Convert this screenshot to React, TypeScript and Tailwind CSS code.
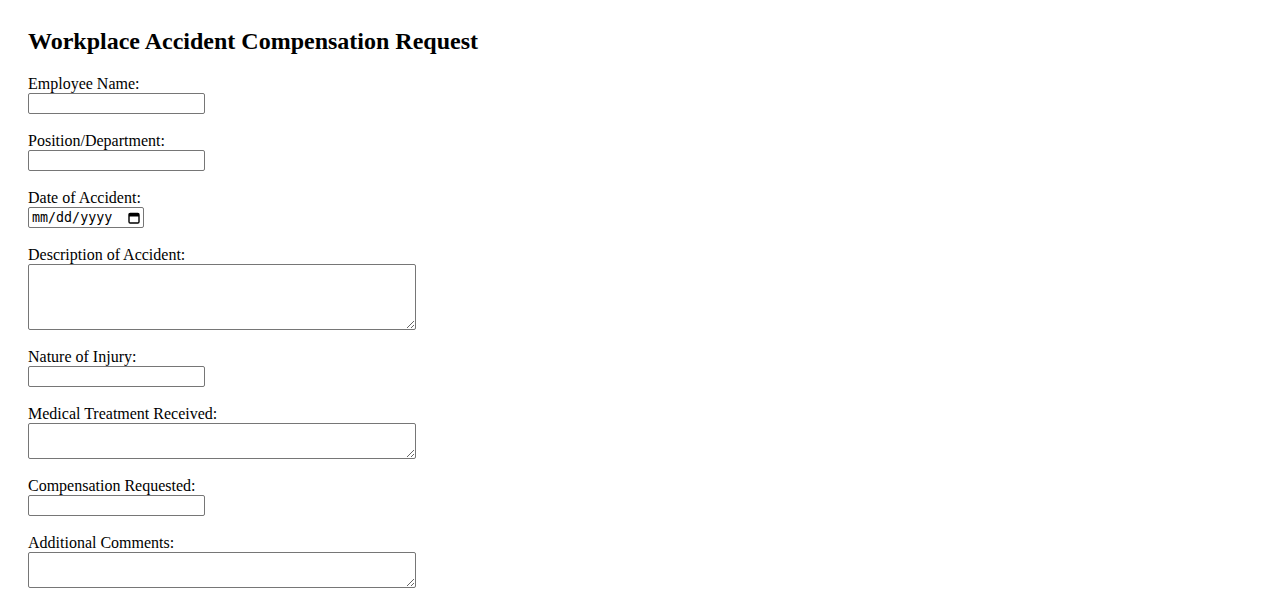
import React from "react";

const serif = { fontFamily: '"Liberation Serif", "Times New Roman", serif' };

function Label({ children }: { children: React.ReactNode }) {
  return <label className="block text-[16px] leading-[15px] pb-[2px] text-black">{children}</label>;
}

function TextInput() {
  return (
    <input
      type="text"
      className="block w-[177px] h-[21px] border border-[#767676] rounded-[2px] bg-white px-[2px] py-[1px] text-[13.33px] [font-family:'DejaVu_Sans',sans-serif]"
    />
  );
}

function Area({ h }: { h: string }) {
  return (
    <textarea
      className={`block w-[388px] ${h} border border-[#767676] rounded-[2px] bg-white px-[2px] py-[2px] text-[13.33px] [font-family:'Liberation_Mono',monospace] resize`}
    />
  );
}

export default function App() {
  return (
    <div className="bg-white p-[28px] text-black" style={serif}>
      <h2 className="text-[24px] font-bold leading-[26px] mb-[22px]">Workplace Accident Compensation Request</h2>
      <form className="flex flex-col">
        <div className="mb-[19px]">
          <Label>Employee Name:</Label>
          <TextInput />
        </div>
        <div className="mb-[19px]">
          <Label>Position/Department:</Label>
          <TextInput />
        </div>
        <div className="mb-[19px]">
          <Label>Date of Accident:</Label>
          <div className="flex items-center w-[116px] h-[21px] border border-[#767676] rounded-[2px] bg-white pl-[3px] pr-[2px] justify-between">
            <span className="text-[13.33px] leading-[19px] text-black [font-family:'DejaVu_Sans_Mono',monospace]">mm/dd/yyyy</span>
            <svg width="12" height="12" viewBox="0 0 12 12" className="mr-[1px]">
              <rect x="1" y="1.5" width="10" height="9.5" rx="1.2" fill="none" stroke="#000" strokeWidth="1.4" />
              <rect x="1" y="1.5" width="10" height="3" fill="#000" />
            </svg>
          </div>
        </div>
        <div className="mb-[19px]">
          <Label>Description of Accident:</Label>
          <Area h="h-[66px]" />
        </div>
        <div className="mb-[19px]">
          <Label>Nature of Injury:</Label>
          <TextInput />
        </div>
        <div className="mb-[19px]">
          <Label>Medical Treatment Received:</Label>
          <Area h="h-[36px]" />
        </div>
        <div className="mb-[19px]">
          <Label>Compensation Requested:</Label>
          <TextInput />
        </div>
        <div>
          <Label>Additional Comments:</Label>
          <Area h="h-[36px]" />
        </div>
      </form>
    </div>
  );
}
